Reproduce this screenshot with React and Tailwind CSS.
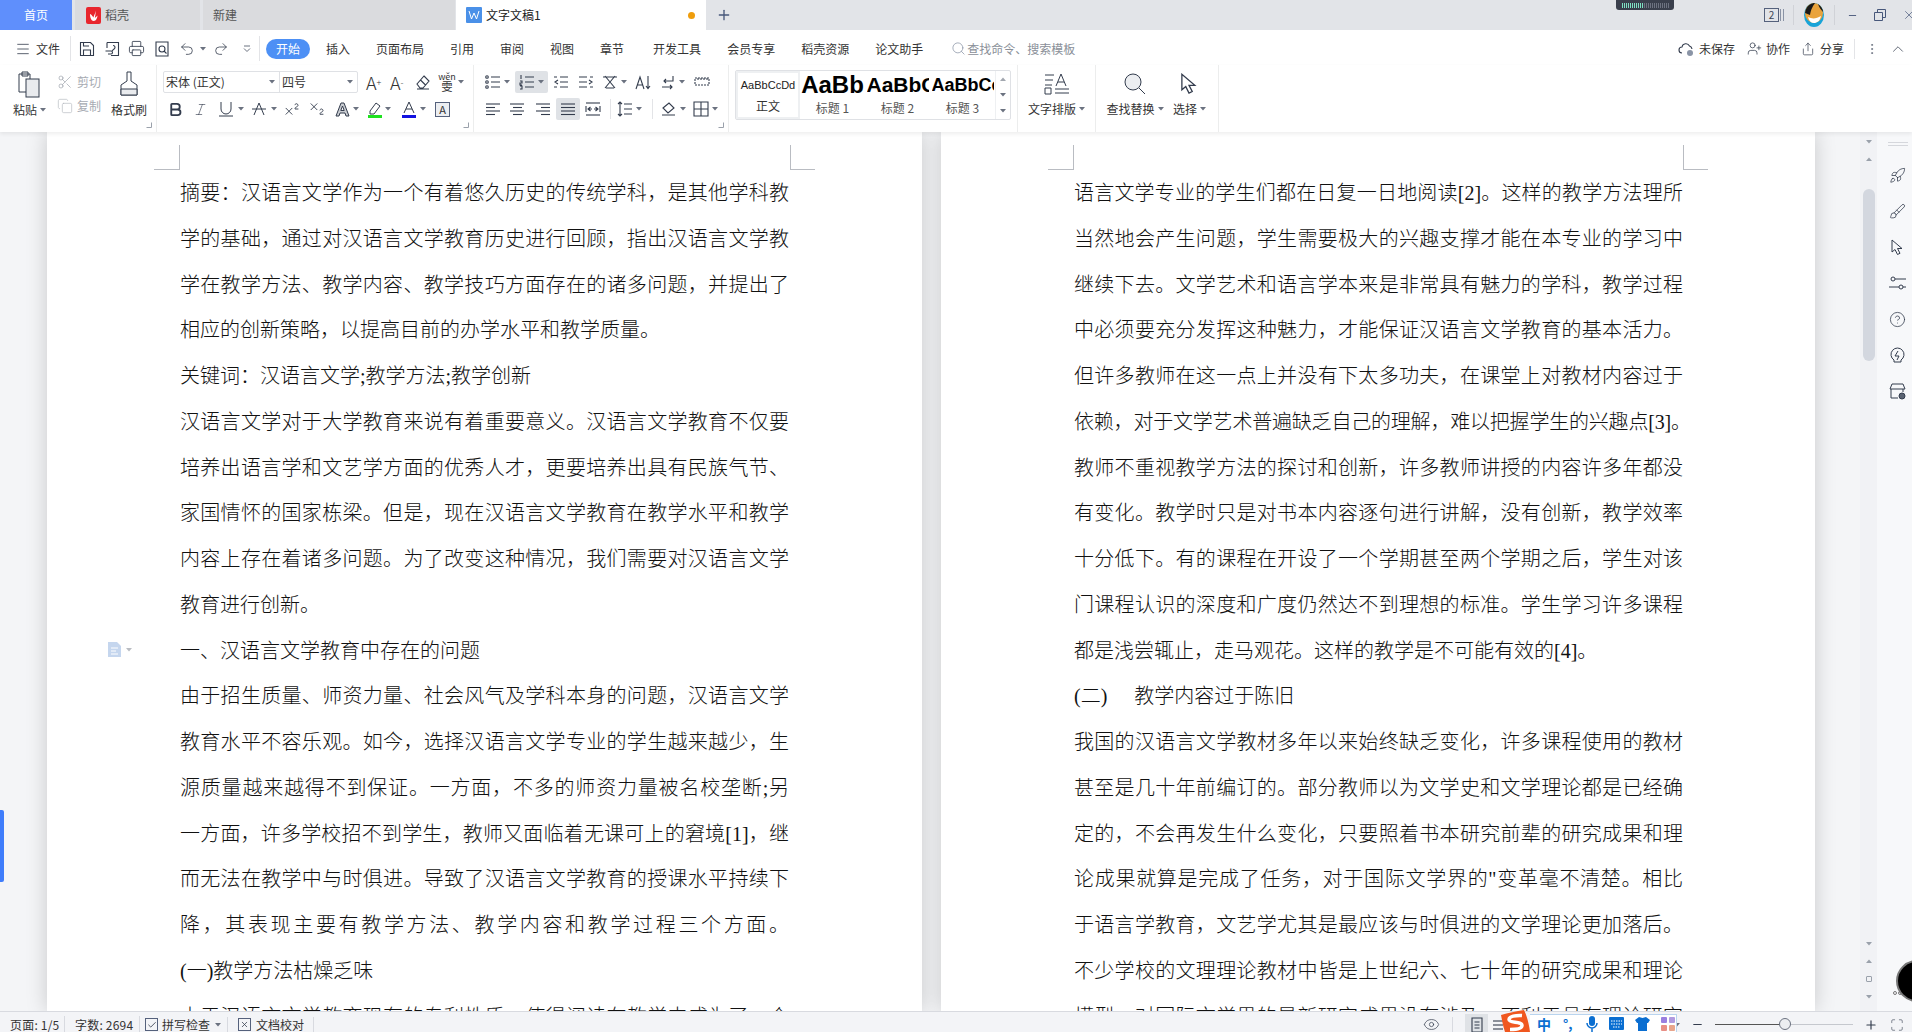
import React from 'react'
import {
  Menu, Printer, Undo2, Redo2, Scissors, Copy, Bold, Italic, Superscript, Subscript, Search, Plus, Minus, X,
  ChevronUp, EllipsisVertical, Eye, Rocket, Brush, CircleHelp, Check, UserPlus, Share, Maximize,
} from 'lucide-react'

const ui = 'font-["Noto_Sans_CJK_SC","Noto_Sans",sans-serif]'
const dark = '#333c4d'

const leftLines = [
  ['摘要：汉语言文学作为一个有着悠久历史的传统学科，是其他学科教', 1],
  ['学的基础，通过对汉语言文学教育历史进行回顾，指出汉语言文学教', 1],
  ['学在教学方法、教学内容、教学技巧方面存在的诸多问题，并提出了', 1],
  ['相应的创新策略，以提高目前的办学水平和教学质量。', 0],
  ['关键词：汉语言文学;教学方法;教学创新', 0],
  ['汉语言文学对于大学教育来说有着重要意义。汉语言文学教育不仅要', 1],
  ['培养出语言学和文艺学方面的优秀人才，更要培养出具有民族气节、', 1],
  ['家国情怀的国家栋梁。但是，现在汉语言文学教育在教学水平和教学', 1],
  ['内容上存在着诸多问题。为了改变这种情况，我们需要对汉语言文学', 1],
  ['教育进行创新。', 0],
  ['一、汉语言文学教育中存在的问题', 0],
  ['由于招生质量、师资力量、社会风气及学科本身的问题，汉语言文学', 1],
  ['教育水平不容乐观。如今，选择汉语言文学专业的学生越来越少，生', 1],
  ['源质量越来越得不到保证。一方面，不多的师资力量被名校垄断;另', 1],
  ['一方面，许多学校招不到学生，教师又面临着无课可上的窘境[1]，继', 1],
  ['而无法在教学中与时俱进。导致了汉语言文学教育的授课水平持续下', 1],
  ['降，其表现主要有教学方法、教学内容和教学过程三个方面。', 1],
  ['(一)教学方法枯燥乏味', 0],
  ['由于汉语言文学教育现有的专利性质，使得阅读在教学中成为了一个', 1],
]

const rightLines = [
  ['语言文学专业的学生们都在日复一日地阅读[2]。这样的教学方法理所', 1],
  ['当然地会产生问题，学生需要极大的兴趣支撑才能在本专业的学习中', 1],
  ['继续下去。文学艺术和语言学本来是非常具有魅力的学科，教学过程', 1],
  ['中必须要充分发挥这种魅力，才能保证汉语言文学教育的基本活力。', 1],
  ['但许多教师在这一点上并没有下太多功夫，在课堂上对教材内容过于', 1],
  ['依赖，对于文学艺术普遍缺乏自己的理解，难以把握学生的兴趣点[3]。', 2],
  ['教师不重视教学方法的探讨和创新，许多教师讲授的内容许多年都没', 1],
  ['有变化。教学时只是对书本内容逐句进行讲解，没有创新，教学效率', 1],
  ['十分低下。有的课程在开设了一个学期甚至两个学期之后，学生对该', 1],
  ['门课程认识的深度和广度仍然达不到理想的标准。学生学习许多课程', 1],
  ['都是浅尝辄止，走马观花。这样的教学是不可能有效的[4]。', 0],
  [<>(二)<span className="ml-[27px]">教学内容过于陈旧</span></>, 0],
  ['我国的汉语言文学教材多年以来始终缺乏变化，许多课程使用的教材', 1],
  ['甚至是几十年前编订的。部分教师以为文学史和文学理论都是已经确', 1],
  ['定的，不会再发生什么变化，只要照着书本研究前辈的研究成果和理', 1],
  ['论成果就算是完成了任务，对于国际文学界的"变革毫不清楚。相比', 1],
  ['于语言学教育，文艺学尤其是最应该与时俱进的文学理论更加落后。', 1],
  ['不少学校的文理理论教材中皆是上世纪六、七十年的研究成果和理论', 1],
  ['模型，对国际文学界的最新研究成果没有涉及。不利于具有理论研究', 1],
]

function Caret({ color = '#6b7280', className = '' }) {
  return (
    <svg width="6" height="4" viewBox="0 0 6 4" className={className}>
      <path d="M0 0h6L3 3.5z" fill={color} />
    </svg>
  )
}

function Ic({ size = 16, children, className = '', sw = 1.1 }) {
  return (
    <svg width={size} height={size} viewBox="0 0 16 16" fill="none" stroke={dark} strokeWidth={sw} className={`shrink-0 ${className}`}>
      {children}
    </svg>
  )
}

function Launcher() {
  return (
    <svg width="6" height="6" viewBox="0 0 6 6" className="absolute right-[4px] bottom-[4px]">
      <path d="M.5 5.5h5v-5" fill="none" stroke="#9aa1ab" />
    </svg>
  )
}

function Lines({ d }) {
  return <Ic>{d.map((l, i) => <path key={i} d={l} />)}</Ic>
}

function Cursor({ size = 17, className = '' }) {
  return (
    <svg width={size} height={size} viewBox="0 0 17 17" fill="none" stroke={dark} className={className}>
      <path d="M3 1v12l3-2.500 2.500 5 2.500-1.200L8.500 9.500H13z" />
    </svg>
  )
}

function Page({ lines, width }) {
  return (
    <div className="relative h-full bg-white shadow-[0_0_20px_rgba(0,0,0,0.18)]" style={{ width }}>
      <div className="absolute top-[13px] left-[107px] h-[25px] w-[26px] border-r border-b border-[#b9bcc2]"></div>
      <div className="absolute top-[13px] right-[107px] h-[25px] w-[25px] border-b border-l border-[#b9bcc2]"></div>
      <div className="ml-[133px] w-[609px] pt-[39px] font-['Liberation_Serif','Noto_Sans_CJK_SC',serif] text-[20px] font-light leading-[45.75px] text-[#111]">
        {lines.map(([text, just], i) => (
          <div
            key={i}
            className={
              just === 2
                ? 'whitespace-nowrap text-justify tracking-[-0.2px] [text-align-last:justify]'
                : just
                ? 'whitespace-nowrap text-justify [text-align-last:justify]'
                : 'whitespace-nowrap'
            }
          >
            {text}
          </div>
        ))}
      </div>
    </div>
  )
}

function TabBar() {
  return (
    <div className="flex h-[30px] items-stretch bg-[#e2e4e8] text-[12px] text-[#555]">
      <div className="flex w-[72px] items-center justify-center bg-[#5f8ffc] text-white">首页</div>
      <div className="ml-[3px] flex w-[125px] items-center bg-[#dadbde] pl-[11px]">
        <svg width="15" height="17" viewBox="0 0 15 17">
          <rect width="15" height="17" rx="2" fill="#e8262d" />
          <path d="M9 3c1 3-1 5-1.500 7.500C6.500 9 5.500 7.500 4 7c0 3.500 1.200 7 3.800 7 2.200 0 3.500-3 3.700-5.500-1 1-2 2-2.700 2.300C9.500 8 10 5 9 3z" fill="#fff" />
        </svg>
        <span className="ml-[4px]">稻壳</span>
      </div>
      <div className="ml-[3px] flex w-[252px] items-center bg-[#dadbde] pl-[10px]">新建</div>
      <div className="ml-[1px] flex w-[250px] items-center bg-white pl-[10px] text-[#222]">
        <svg width="16" height="16" viewBox="0 0 16 16">
          <rect width="16" height="16" rx="1" fill="#4a90e8" />
          <path d="M3 4l2.500 8L8 6l2.500 6L13 4" fill="none" stroke="#fff" />
        </svg>
        <span className="ml-[4px]">文字文稿1</span>
        <span className="ml-[147px] h-[7px] w-[7px] rounded-full bg-[#ef9d0c]"></span>
      </div>
      <div className="ml-[10px] flex items-center">
        <Plus size={16} color="#47577a" strokeWidth={2} />
      </div>
      <div className="flex flex-1 justify-end pr-[26px]">
        <div className="mr-[90px] flex h-[10px] w-[58px] items-center justify-center gap-[1px] rounded-b-[3px] bg-[#3a3f4c]">
          {Array.from({ length: 24 }).map((_, i) => (
            <span key={i} className={i < 11 ? 'h-[5px] w-[1px] bg-[#7ee0c2]' : 'h-[5px] w-[1px] bg-[#6d7280]'}></span>
          ))}
        </div>
        <div className="flex items-center">
          <div className="flex h-[14px] w-[15px] items-center justify-center border border-[#55617c] text-[10px] leading-none text-[#3c4555]">2</div>
          <span className="ml-[1px] h-[12px] w-[4px] border-x border-[#8a93a5]"></span>
          <span className="ml-[9px] h-[20px] w-[1px] bg-[#d0d2d7]"></span>
          <svg width="20" height="24" viewBox="0 0 20 24" className="ml-[10px]">
            <ellipse cx="10" cy="12" rx="10" ry="12" fill="#19a4d8" />
            <ellipse cx="10" cy="10" rx="9" ry="10" fill="#e9a33c" />
            <path d="M1 10C2 2 8 0 11 0c-2 3-4 6-5 12zM14 1c3 2 5 5 5 8-2-2-4-5-5-8z" fill="#1a1a1a" />
            <path d="M4 14c4 2 8 2 13-1-1 5-4 7-7 7s-5-2-6-6z" fill="#fff" />
          </svg>
          <span className="ml-[10px] h-[20px] w-[1px] bg-[#d0d2d7]"></span>
          <Minus size={11} color="#47577a" className="ml-[12px]" />
          <svg width="12" height="12" viewBox="0 0 12 12" fill="none" stroke="#47577a" className="ml-[16px]">
            <path d="M.5 3.500h8v8h-8zM3.500 3.500v-3h8v8h-3" />
          </svg>
        </div>
        <X size={14} color="#47577a" strokeWidth={1.2} className="absolute right-[-4px] top-[8px]" />
      </div>
    </div>
  )
}

function MenuBar() {
  const tabs = ['插入', '页面布局', '引用', '审阅', '视图', '章节']
  const tabs2 = ['开发工具', '会员专享', '稻壳资源', '论文助手']
  return (
    <div className="flex h-[35px] items-center bg-white pt-[2px] text-[12px] text-[#333]">
      <Menu size={16} color={dark} strokeWidth={1.2} className="ml-[15px]" />
      <span className="ml-[5px]">文件</span>
      <span className="ml-[10px] h-[25px] w-[1px] bg-[#e3e4e7]"></span>
      <Ic className="ml-[8px]"><path d="M1.500 1.500h10l3 3v10h-13zM4.500 14.500V9h7v5.500M4.500 1.500V5h5.500" /></Ic>
      <Ic className="ml-[9px]"><path d="M3 1.500h11.500v13H7M3 1.500V7M1.500 10H7a1.500 1.500 0 110 3H4M9 4.500a2 2 0 012 2c0 2-3 2-3 4" /></Ic>
      <Printer size={17} color={dark} strokeWidth={1.2} className="ml-[8px]" />
      <Ic className="ml-[9px]"><path d="M2 1h12v14H2z" /><circle cx="8" cy="8" r="3" /><path d="M10 10l2.500 2.500" /></Ic>
      <Undo2 size={16} color={dark} strokeWidth={1.2} className="ml-[9px]" />
      <Caret className="ml-[5px]" />
      <Redo2 size={16} color={dark} strokeWidth={1.2} className="ml-[7px]" />
      <svg width="8" height="8" viewBox="0 0 8 8" fill="none" stroke="#6b7280" className="ml-[14px]">
        <path d="M1 1h6M1 3.500l3 3 3-3" />
      </svg>
      <span className="ml-[8px] h-[25px] w-[1px] bg-[#e3e4e7]"></span>
      <span className="ml-[6px] flex h-[20px] w-[44px] items-center justify-center rounded-full bg-[#4d90f5] text-white">开始</span>
      <div className="ml-[16px] flex gap-[26px] whitespace-nowrap">
        {tabs.map((t) => <span key={t}>{t}</span>)}
      </div>
      <div className="ml-[29px] flex gap-[26px] whitespace-nowrap">
        {tabs2.map((t) => <span key={t}>{t}</span>)}
      </div>
      <Search size={15} color="#8a94a6" strokeWidth={1.2} className="ml-[28px]" />
      <span className="ml-[1px] text-[#8a8f98]">查找命令、搜索模板</span>
      <div className="ml-auto flex items-center">
        <Ic><path d="M4 12a3 3 0 010-6 4 4 0 017.500-1A3.500 3.500 0 0114 8" /><circle cx="12" cy="12" r="3" fill="#8a94a6" stroke="none" /></Ic>
        <span className="ml-[5px]">未保存</span>
        <UserPlus size={15} color={dark} strokeWidth={1.2} className="ml-[12px]" />
        <span className="ml-[4px]">协作</span>
        <Share size={14} color={dark} strokeWidth={1.2} className="ml-[11px]" />
        <span className="ml-[5px]">分享</span>
        <span className="ml-[10px] h-[20px] w-[1px] bg-[#e3e4e7]"></span>
        <EllipsisVertical size={14} color="#6b7280" strokeWidth={1.5} className="ml-[10px]" />
        <ChevronUp size={18} color={dark} strokeWidth={1} className="ml-[10px] mr-[5px]" />
      </div>
    </div>
  )
}

function Ribbon() {
  return (
    <div className="relative z-10 flex h-[67px] items-stretch bg-white text-[12px] text-[#333] shadow-[0_2px_4px_rgba(0,0,0,0.07)]">
      {/* clipboard */}
      <div className="relative flex w-[157px] border-r border-[#eceded] pt-[6px]">
        <div className="ml-[13px] flex w-[35px] flex-col items-start">
          <svg width="24" height="27" viewBox="0 0 24 27" fill="none" stroke={dark} className="ml-[3px]">
            <path d="M3 3h11v5M3 3v18h7M6 1h6v4H6z" />
            <rect x="10" y="8" width="13" height="18" fill="#e9ebee" />
          </svg>
          <div className="mt-[3px] flex items-center gap-[3px]">粘贴<Caret /></div>
        </div>
        <div className="ml-[9px] flex w-[54px] flex-col gap-[6px] text-[#a7abb2]">
          <div className="mt-[2px] flex items-center gap-[4px]"><Scissors size={16} color="#9aa0a9" strokeWidth={1} />剪切</div>
          <div className="flex items-center gap-[4px]"><Copy size={16} color="#b5b9c0" strokeWidth={1} />复制</div>
        </div>
        <div className="flex w-[36px] flex-col items-center">
          <svg width="20" height="26" viewBox="0 0 20 26" fill="none" stroke={dark}>
            <path d="M8 1h4v9l6 4v10H2V14l6-4z" />
            <path d="M2 18h16v6H2z" fill="#e9ebee" />
          </svg>
          <div className="mt-[4px] whitespace-nowrap">格式刷</div>
        </div>
        <Launcher />
      </div>
      {/* font */}
      <div className="relative flex w-[317px] flex-col gap-[5px] border-r border-[#eceded] pt-[6px]">
        <div className="ml-[6px] flex h-[22px] items-center">
          <div className="flex h-[22px] w-[195px] items-center rounded-[2px] border border-[#dfe1e5]">
            <div className="flex h-full w-[116px] items-center justify-between border-r border-[#dfe1e5] pl-[2px] pr-[4px]">宋体 (正文)<Caret /></div>
            <div className="flex flex-1 items-center justify-between pl-[2px] pr-[4px]">四号<Caret /></div>
          </div>
          <span className="ml-[8px] w-[16px] text-[18px] font-light leading-none">A<sup className="text-[9px]">+</sup></span>
          <span className="ml-[8px] w-[17px] text-[18px] font-light leading-none">A<sup className="text-[9px]">-</sup></span>
          <Ic className="ml-[8px]"><path d="M9 2l5 5-6 7H5L2 10zM5.500 6l5 5M2 15h12" /></Ic>
          <div className="ml-[8px] flex w-[16px] flex-col items-center text-[9px] leading-[8px]"><span>wěn</span><span className="text-[11px] leading-[10px]">雯</span></div>
          <Caret className="ml-[3px]" />
        </div>
        <div className="ml-[10px] flex h-[22px] items-center">
          <Bold size={17} color={dark} strokeWidth={2.6} />
          <Italic size={15} color={dark} strokeWidth={1} className="ml-[9px]" />
          <svg width="16" height="16" viewBox="0 0 16 16" fill="none" stroke={dark} className="ml-[10px]"><path d="M3 1v7a5 5 0 0010 0V1M1 15h14" /></svg>
          <Caret className="ml-[4px]" />
          <svg width="14" height="16" viewBox="0 0 14 16" fill="none" stroke={dark} className="ml-[8px]"><path d="M2 14L7 2l5 12M0 8h14" /></svg>
          <Caret className="ml-[5px]" />
          <Superscript size={18} color={dark} strokeWidth={1.2} className="ml-[6px]" />
          <Subscript size={18} color={dark} strokeWidth={1.2} className="ml-[7px]" />
          <svg width="15" height="16" viewBox="0 0 15 16" fill="#c9ccd1" stroke={dark} className="ml-[9px]"><path d="M1 15L6 2h3l5 13h-3l-1-3H5l-1 3zM5.800 9.500h3.400L7.500 5z" /></svg>
          <Caret className="ml-[3px]" />
          <svg width="14" height="17" viewBox="0 0 14 17" fill="none" className="ml-[9px]">
            <path d="M2 10l6-8 4 3-6 8H2z" stroke={dark} />
            <rect y="14" width="14" height="3" fill="#1fe11f" />
          </svg>
          <Caret className="ml-[3px]" />
          <svg width="14" height="17" viewBox="0 0 14 17" fill="none" className="ml-[11px]">
            <path d="M2 12L7 1l5 11M4 8h6" stroke={dark} />
            <rect y="14" width="14" height="3" fill="#1212e0" />
          </svg>
          <Caret className="ml-[4px]" />
          <div className="ml-[9px] flex h-[15px] w-[15px] items-center justify-center border border-[#55617c] bg-[#eceef1] text-[11px] leading-none">A</div>
        </div>
        <Launcher />
      </div>
      {/* paragraph */}
      <div className="relative flex w-[255px] flex-col gap-[5px] border-r border-[#eceded] pt-[6px]">
        <div className="ml-[11px] flex h-[22px] items-center">
          <Ic><circle cx="2" cy="3" r="1.300" /><circle cx="2" cy="8" r="1.300" /><circle cx="2" cy="13" r="1.300" /><path d="M6 3h9M6 8h9M6 13h9" /></Ic>
          <Caret className="ml-[3px]" />
          <div className="ml-[5px] flex h-[22px] w-[33px] items-center justify-center gap-[3px] rounded-[2px] bg-[#dfe2e6]">
            <Ic><path d="M6 3h9M6 8h9M6 13h9M2 1v4M1 7h2v2H1v2h2M1 12h2v3H1" /></Ic>
            <Caret />
          </div>
          <Ic className="ml-[5px]"><path d="M7 3h8M7 8h8M7 13h8M1 3h3M1 13h3M5 6L2 8l3 2" /></Ic>
          <Ic className="ml-[9px]"><path d="M1 3h8M1 8h8M1 13h8M12 3h3M12 13h3M11 6l3 2-3 2" /></Ic>
          <Ic className="ml-[8px]"><path d="M3 2l10 12M13 2L3 14M1 3h14M4 14h8" /></Ic>
          <Caret className="ml-[3px]" />
          <Ic className="ml-[8px]"><path d="M1 15L5 3l4 12M2.500 11h5M13 2v12M11 12l2 2.500 2-2.500" /></Ic>
          <Ic className="ml-[9px]"><path d="M13 2v5H4M6 5L4 7l2 2M2 13h10M10 11l2 2-2 2" /></Ic>
          <Caret className="ml-[3px]" />
          <Ic className="ml-[9px]"><path d="M1 4h14v7H1zM4 4v3M7 4v3M10 4v3M13 4v3" strokeDasharray="2 1" /></Ic>
        </div>
        <div className="ml-[11px] flex h-[22px] items-center">
          <Lines d={['M1 3h14', 'M1 6.500h9', 'M1 10h14', 'M1 13.500h9']} />
          <div className="ml-[8px]"><Lines d={['M1 3h14', 'M4 6.500h9', 'M1 10h14', 'M4 13.500h9']} /></div>
          <div className="ml-[10px]"><Lines d={['M1 3h14', 'M6 6.500h9', 'M1 10h14', 'M6 13.500h9']} /></div>
          <div className="ml-[5px] flex h-[22px] w-[24px] items-center justify-center rounded-[2px] bg-[#dfe2e6]">
            <Lines d={['M1 3h14', 'M1 6.500h14', 'M1 10h14', 'M1 13.500h14']} />
          </div>
          <div className="ml-[5px]"><Lines d={['M1 2h14', 'M1 14h14', 'M1 5v6M15 5v6M3 8h4M5.500 6L3 8l2.500 2M13 8H9M10.500 6L13 8l-2.500 2']} /></div>
          <span className="ml-[9px] h-[20px] w-[1px] bg-[#e3e4e7]"></span>
          <div className="ml-[6px]"><Lines d={['M7 3h8M7 8h8M7 13h8M3 1v14M1 3l2-2 2 2M1 13l2 2 2-2']} /></div>
          <Caret className="ml-[3px]" />
          <span className="ml-[10px] h-[20px] w-[1px] bg-[#e3e4e7]"></span>
          <div className="ml-[8px]"><Lines d={['M2 7l6-5 5 5-6 5zM1 14h13']} /></div>
          <Caret className="ml-[3px]" />
          <div className="ml-[7px]"><Lines d={['M1 1h14v14H1z', 'M8 1v14M1 8h14']} /></div>
          <Caret className="ml-[3px]" />
        </div>
        <Launcher />
      </div>
      {/* styles */}
      <div className="flex w-[289px] border-r border-[#eceded] pl-[6px] pt-[5px]">
        <div className="flex h-[50px] w-[276px] rounded-[2px] border border-[#dfe1e5] font-['Liberation_Sans',sans-serif]">
          <div className="flex w-[64px] flex-col items-center justify-between border-2 border-[#eef0f2] py-[2px]">
            <span className="mt-[3px] text-[11px] leading-[14px] text-[#222]">AaBbCcDd</span>
            <span className={ui}>正文</span>
          </div>
          <div className="flex w-[65px] flex-col items-center justify-between overflow-hidden">
            <span className="text-[24px] font-bold leading-[28px] text-black">AaBb</span>
            <span className={`${ui} pb-[2px] text-[#555]`}>标题 1</span>
          </div>
          <div className="flex w-[65px] flex-col items-center overflow-hidden">
            <span className="w-[62px] overflow-hidden whitespace-nowrap text-[21px] font-bold leading-[28px] text-black">AaBbC</span>
            <span className={`${ui} mt-auto pb-[2px] text-[#555]`}>标题 2</span>
          </div>
          <div className="flex w-[65px] flex-col items-center overflow-hidden">
            <span className="w-[62px] overflow-hidden whitespace-nowrap text-[18px] font-bold leading-[28px] text-black">AaBbCc</span>
            <span className={`${ui} mt-auto pb-[2px] text-[#555]`}>标题 3</span>
          </div>
          <div className="flex flex-1 flex-col items-center justify-around border-l border-[#eef0f2]">
            <Caret color="#a2a7af" className="rotate-180" />
            <Caret color="#6b7280" />
            <Caret color="#6b7280" />
          </div>
        </div>
      </div>
      {/* tools */}
      <div className="flex w-[78px] flex-col items-center border-r border-[#eceded] pt-[8px]">
        <svg width="26" height="22" viewBox="0 0 26 22" fill="none" stroke={dark}>
          <path d="M1 2h9M1 7h8M1 12h7M12 13L17 1l5 12M14 9h6M1 15h6v6H1zM11 16h14M11 20h14" />
        </svg>
        <div className="mt-[5px] flex items-center gap-[3px] whitespace-nowrap">文字排版<Caret /></div>
      </div>
      <div className="relative flex w-[123px] border-r border-[#eceded] pt-[8px]">
        <div className="ml-[9px] flex w-[60px] flex-col items-center">
          <svg width="24" height="22" viewBox="0 0 24 22" fill="none" stroke={dark}>
            <circle cx="10" cy="9" r="8" fill="#eceef1" />
            <path d="M16 15l6 6" />
          </svg>
          <div className="mt-[5px] flex items-center gap-[3px] whitespace-nowrap">查找替换<Caret /></div>
        </div>
        <div className="ml-[8px] flex w-[36px] flex-col items-start">
          <Cursor size={22} className="ml-[5px]" />
          <div className="mt-[5px] flex items-center gap-[3px] whitespace-nowrap">选择<Caret /></div>
        </div>
      </div>
    </div>
  )
}

function StatusBar() {
  return (
    <div className="relative z-20 flex h-[21px] items-center border-t border-[#d8dae0] bg-[#f3f4f7] pt-[5px] text-[12px] text-[#333]">
      <span className="ml-[10px] w-[55px] border-r border-[#d8dae0] whitespace-nowrap tracking-[0.2px]">页面: 1/5</span>
      <span className="ml-[10px] w-[65px] border-r border-[#d8dae0] whitespace-nowrap tracking-[0.2px]">字数: 2694</span>
      <span className="ml-[5px] flex h-[13px] w-[13px] items-center justify-center border border-[#55617c]"><Check size={10} color={dark} /></span>
      <span className="ml-[4px]">拼写检查</span>
      <Caret className="ml-[5px]" />
      <span className="ml-[6px] h-[16px] w-[1px] bg-[#d8dae0]"></span>
      <span className="ml-[10px] flex h-[13px] w-[13px] items-center justify-center border border-[#55617c]"><X size={9} color={dark} /></span>
      <span className="ml-[5px]">文档校对</span>
      <span className="ml-[9px] h-[16px] w-[1px] bg-[#d8dae0]"></span>
      <div className="ml-auto flex items-center">
        <Eye size={17} color={dark} strokeWidth={1} />
        <span className="ml-[12px] h-[16px] w-[1px] bg-[#d8dae0]"></span>
        <div className="ml-[12px] flex h-[21px] w-[23px] items-center justify-center bg-[#dfe2e6]">
          <Lines d={['M3 1h10v14H3z', 'M5.500 5h5M5.500 8h5M5.500 11h5']} />
        </div>
        {/* sogou input bar sits in this gap */}
        <div className="w-[186px] pl-[2px]">
          <Lines d={['M3 4h10', 'M3 8h10', 'M3 12h10']} />
        </div>
        <Caret />
        <Minus size={13} color={dark} strokeWidth={2} className="ml-[11px]" />
        <div className="relative ml-[11px] h-[1px] w-[138px] bg-[#555]">
          <div className="absolute left-[70px] h-[1px] w-[68px] bg-[#c5c8ce]"></div>
          <div className="absolute left-[64px] top-[-6px] h-[12px] w-[12px] rounded-full border border-[#6b7280] bg-[#eceef1]"></div>
        </div>
        <Plus size={14} color={dark} strokeWidth={2} className="ml-[11px]" />
        <Maximize size={14} color={dark} strokeWidth={1} className="ml-[12px] mr-[8px]" />
      </div>
      {/* sogou */}
      <div className="absolute bottom-0 left-[1500px] flex h-[22px] items-end">
        <svg width="30" height="22" viewBox="0 0 30 22" className="shrink-0">
          <path d="M1 5C8 3 16 1 24 0c3 6 5 14 6 22H5C3 16 2 10 1 5z" fill="#f0571f" />
          <path d="M22 5.500C16 5 9 6.500 9 9.500c0 4 13 1.500 13 6 0 3-6 4-12 4" fill="none" stroke="#fff" strokeWidth="3.500" />
        </svg>
        <div className="flex h-[18px] w-[147px] items-center gap-[11px] border-t border-r border-[#b9d4ee] bg-white pl-[7px] text-[#0a6ed1]">
          <span className="w-[15px] text-[14px] leading-none font-bold">中</span>
          <span className="w-[12px] text-[13px] leading-none font-bold">°,</span>
          <svg width="12" height="16" viewBox="0 0 12 16"><rect x="3" width="6" height="10" rx="3" fill="#0a6ed1" /><path d="M1 7a5 5 0 0010 0M6 12v4" fill="none" stroke="#0a6ed1" strokeWidth="1.500" /></svg>
          <svg width="15" height="13" viewBox="0 0 15 13"><rect width="15" height="13" rx="1" fill="#0a6ed1" /><path d="M2 4h11M2 7h11M4 10h7" stroke="#fff" strokeDasharray="1.500 1" /></svg>
          <svg width="15" height="14" viewBox="0 0 15 14"><path d="M4 0l3.500 1L11 0l4 3-2 3h-1v8H3V6H2L0 3z" fill="#0a6ed1" /></svg>
          <svg width="14" height="14" viewBox="0 0 14 14"><rect width="6" height="6" rx="1" fill="#9a7fe0" /><rect x="8" width="6" height="6" rx="1" fill="#b09ae0" /><rect y="8" width="6" height="6" rx="1" fill="#e88f86" /><rect x="8" y="8" width="6" height="6" rx="1" fill="#e8a58c" /></svg>
        </div>
      </div>
    </div>
  )
}

function SidePanel() {
  const s = { color: dark, strokeWidth: 1.1, size: 17 }
  return (
    <div className="flex w-[35px] flex-col items-center bg-[#f7f8fa] pl-[6px]">
      <div className="mt-[10px] h-[4px] w-[20px] border-y border-[#d5d7dc]"></div>
      <div className="mt-[21px] flex flex-col items-center gap-[19px]">
        <Rocket {...s} />
        <Brush {...s} />
        <Cursor />
        <svg width="17" height="17" viewBox="0 0 17 17" fill="none" stroke={dark}><circle cx="4" cy="4" r="2" /><path d="M6 4h11M0 12h10M14 12h3" /><circle cx="12" cy="12" r="2" /></svg>
        <CircleHelp {...s} />
        <svg width="17" height="17" viewBox="0 0 17 17" fill="none" stroke={dark}><path d="M5 15h7v-2a6.500 6.500 0 10-7 0zM9 4L6 9h4l-2 4" /></svg>
        <svg width="17" height="17" viewBox="0 0 17 17" fill="none" stroke={dark}><path d="M3 1h11l2 5H1zM2 6v9h7M14 6v3" /><circle cx="13" cy="13" r="3" fill="#5a6372" /></svg>
      </div>
    </div>
  )
}

export default function App() {
  return (
    <div className={`${ui} relative flex h-[1032px] w-[1912px] flex-col overflow-hidden bg-white`}>
      <TabBar />
      <MenuBar />
      <Ribbon />
      <div className="relative flex min-h-0 flex-1 overflow-hidden bg-[#f4f5f7]">
        <div className="flex flex-1 gap-[19px] overflow-hidden pl-[47px]">
          <Page lines={leftLines} width={875} />
          <Page lines={rightLines} width={874} />
        </div>
        <div className="flex w-[17px] flex-col items-center bg-[#f1f2f5]">
          <Caret color="#9aa1ab" className="mt-[8px]" />
          <Caret color="#9aa1ab" className="mt-[13px] rotate-180" />
          <div className="mt-[28px] h-[172px] w-[12px] shrink-0 rounded-full bg-[#d3d7df]"></div>
          <Caret color="#9aa1ab" className="mt-[581px]" />
          <Caret color="#9aa1ab" className="mt-[13px] rotate-180" />
          <span className="mt-[13px] h-[6px] w-[6px] rounded-[1px] border border-[#9aa1ab]"></span>
          <Caret color="#9aa1ab" className="mt-[13px]" />
        </div>
        <SidePanel />
        {/* left edge handle, outline icon and floating ball lie over the page */}
        <div className="absolute left-0 top-[678px] h-[72px] w-[4px] rounded-r-[2px] bg-[#3f7dfb]"></div>
        <div className="absolute left-[108px] top-[510px] flex items-center gap-[5px]">
          <svg width="13" height="15" viewBox="0 0 13 15"><path d="M0 0h9l4 4v11H0z" fill="#c5d6ee" /><path d="M3 6h7M3 9h5M3 12h7" stroke="#fff" /></svg>
          <Caret color="#b9bcc2" />
        </div>
        <div className="absolute right-[5px] top-[859px] flex gap-[1px]">
          <span className="h-[4px] w-[4px] rounded-full border border-[#777]"></span>
          <span className="h-[4px] w-[4px] rounded-full border border-[#777]"></span>
          <span className="h-[4px] w-[4px] rounded-full border border-[#777]"></span>
        </div>
        <div className="absolute right-[-26px] top-[828px] h-[42px] w-[42px] rounded-full border-2 border-[#777] bg-black"></div>
      </div>
      <StatusBar />
    </div>
  )
}
